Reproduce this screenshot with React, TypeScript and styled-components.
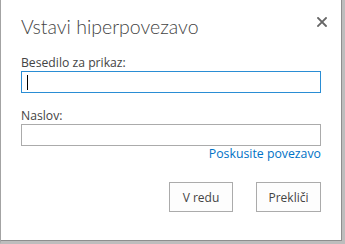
import React, { FC } from "react";
import styled, { createGlobalStyle } from "styled-components";

const GlobalStyle = createGlobalStyle`
  html, body {
    margin: 0;
    padding: 0;
    background: #ffffff;
  }
  body {
    font-family: "Open Sans", "Noto Sans", sans-serif;
  }
`;

const Frame = styled.div`
  width: 345px;
  height: 244px;
  box-sizing: border-box;
  border-left: 1px solid #a3a3a3;
  border-right: 3px solid #bdbdbd;
  border-bottom: 3px solid #bdbdbd;
`;

const Dialog = styled.div`
  height: 100%;
  box-sizing: border-box;
  background: #ffffff;
  border-right: 1px solid #8e8e8e;
  border-bottom: 1px solid #8e8e8e;
  padding: 15px 0 0 20px;
`;

const Content = styled.div`
  width: 300px;
  display: flex;
  flex-direction: column;
`;

const Header = styled.div`
  display: flex;
  justify-content: space-between;
  align-items: flex-start;
`;

const Title = styled.h1`
  margin: 0;
  font-family: Lato, "Open Sans", sans-serif;
  font-size: 19.5px;
  line-height: 24px;
  font-weight: 300;
  color: #444444;
`;

const CloseButton = styled.button`
  margin: 2px -6px 0 0;
  padding: 0;
  border: none;
  background: none;
  width: 10px;
  height: 10px;
  display: flex;
  cursor: pointer;
`;

const Label = styled.label<{ $gap: number }>`
  display: block;
  margin-top: ${(p) => p.$gap}px;
  margin-bottom: 1px;
  font-size: 12.2px;
  line-height: 15px;
  color: #444444;
`;

const Field = styled.div<{ $active?: boolean }>`
  height: 22px;
  box-sizing: border-box;
  border: 1px solid ${(p) => (p.$active ? "#2a8dd4" : "#ababab")};
  display: flex;
  align-items: center;
  padding-left: 5px;
`;

const Caret = styled.span`
  width: 1px;
  height: 15px;
  background: #000000;
`;

const Link = styled.a`
  align-self: flex-end;
  font-size: 12.3px;
  line-height: 15px;
  color: #0072c6;
  text-decoration: none;
`;

const Actions = styled.div`
  display: flex;
  justify-content: flex-end;
  gap: 23px;
  margin-top: 21px;
`;

const Button = styled.button<{ $w: number }>`
  width: ${(p) => p.$w}px;
  height: 30px;
  box-sizing: border-box;
  border: 1px solid #ababab;
  background: #fdfdfd;
  font-family: "Open Sans", "Noto Sans", sans-serif;
  font-size: 12px;
  color: #444444;
  padding: 0;
`;

const App: FC = () => {
  return (
    <>
      <GlobalStyle />
      <Frame>
        <Dialog>
          <Content>
            <Header>
              <Title>Vstavi hiperpovezavo</Title>
              <CloseButton aria-label="Zapri">
                <svg width="10" height="10" viewBox="0 0 10 10">
                  <path
                    d="M1 1 L9 9 M9 1 L1 9"
                    stroke="#666666"
                    strokeWidth="1.8"
                    strokeLinecap="square"
                  />
                </svg>
              </CloseButton>
            </Header>
            <Label $gap={16}>Besedilo za prikaz:</Label>
            <Field $active>
              <Caret />
            </Field>
            <Label $gap={15}>Naslov:</Label>
            <Field />
            <Link href="#">Poskusite povezavo</Link>
            <Actions>
              <Button $w={64}>V redu</Button>
              <Button $w={65}>Prekliči</Button>
            </Actions>
          </Content>
        </Dialog>
      </Frame>
    </>
  );
};

export default App;
